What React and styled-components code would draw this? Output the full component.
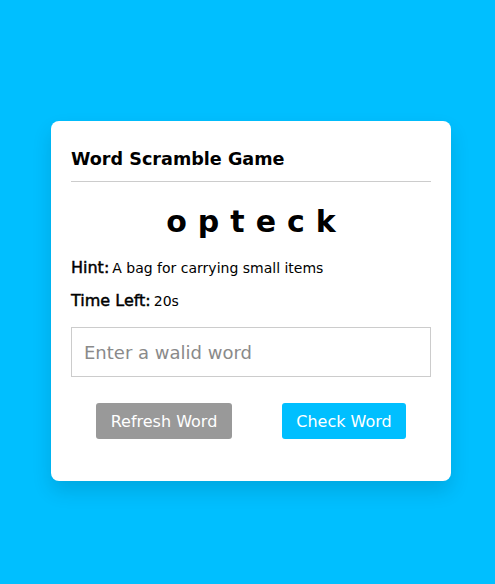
import React from "react";
import styled, { createGlobalStyle } from "styled-components";

const Global = createGlobalStyle`
  * { box-sizing: border-box; }
  html, body { margin: 0; padding: 0; }
  body {
    background: #00bfff;
    font-family: "DejaVu Sans", "Open Sans", sans-serif;
    color: #000;
  }
`;

const Page = styled.div`
  min-height: 584px;
  display: flex;
  justify-content: center;
  align-items: flex-start;
  padding: 121px 0 0 7px;
`;

const Card = styled.div`
  width: 400px;
  height: 360px;
  background: #fff;
  border-radius: 8px;
  box-shadow: 0 10px 20px rgba(0, 0, 0, 0.12);
  padding: 26px 20px 20px;
`;

const Title = styled.h2`
  margin: 0;
  font-size: 17.6px;
  font-weight: 700;
  line-height: 24px;
  padding-bottom: 10px;
  border-bottom: 1px solid #ccc;
`;

const Word = styled.p`
  margin: 20px 0 0;
  text-align: center;
  font-size: 30px;
  font-weight: 700;
  letter-spacing: 11px;
  line-height: 40px;
  padding-left: 11px;
`;

const Detail = styled.p`
  margin: ${(p) => p.$top}px 0 0;
  font-size: 16px;
  line-height: 22px;
  font-weight: 400;
  -webkit-text-stroke: 0.45px #000;
  display: flex;
  align-items: baseline;
  gap: 3px;
`;

const Value = styled.span`
  font-size: 14px;
  font-weight: 400;
  -webkit-text-stroke: 0;
`;

const Input = styled.input`
  display: block;
  width: 100%;
  height: 50px;
  margin-top: 15px;
  border: 1px solid #ccc;
  padding: 0 12px;
  font-family: inherit;
  font-size: 18px;
  outline: none;
  &::placeholder { color: #8a8a8a; }
`;

const Buttons = styled.div`
  display: flex;
  justify-content: space-around;
  margin-top: 26px;
`;

const Button = styled.button`
  border: none;
  border-radius: 3px;
  height: 36px;
  width: ${(p) => p.$w}px;
  background: ${(p) => p.$bg};
  color: #fff;
  font-family: inherit;
  font-size: 16px;
  cursor: pointer;
`;

export default function App() {
  return (
    <>
      <Global />
      <Page>
        <Card>
          <Title>Word Scramble Game</Title>
          <Word>opteck</Word>
          <Detail $top={15}>
            Hint:<Value>A bag for carrying small items</Value>
          </Detail>
          <Detail $top={11}>
            Time Left:<Value>20s</Value>
          </Detail>
          <Input placeholder="Enter a walid word" />
          <Buttons>
            <Button $w={136} $bg="#999">Refresh Word</Button>
            <Button $w={124} $bg="#00bfff">Check Word</Button>
          </Buttons>
        </Card>
      </Page>
    </>
  );
}
